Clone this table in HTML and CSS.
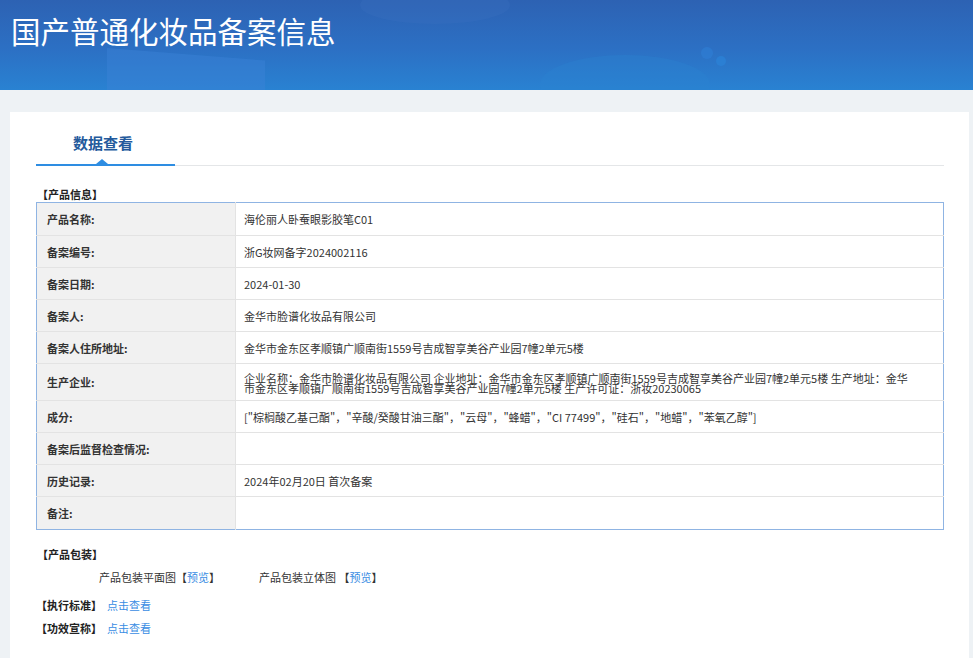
FILE: index.html
```html
<!DOCTYPE html>
<html lang="zh-CN">
<head>
<meta charset="utf-8">
<title>国产普通化妆品备案信息</title>
<link rel="stylesheet" href="styles.css">
</head>
<body>
<header class="banner">
  <div class="decor decor-a"></div>
  <div class="decor decor-b"></div>
  <div class="decor decor-c"></div>
  <div class="decor dot dot-1"></div>
  <div class="decor dot dot-2"></div>
  <h1 class="banner-title">国产普通化妆品备案信息</h1>
</header>
<main class="page">
  <section class="card">
    <div class="tabs">
      <div class="tab active">数据查看</div>
    </div>

    <div class="section-title">【产品信息】</div>
    <table class="info">
      <tr class="edge"><th>产品名称:</th><td>海伦丽人卧蚕眼影胶笔C01</td></tr>
      <tr><th>备案编号:</th><td>浙G妆网备字2024002116</td></tr>
      <tr><th>备案日期:</th><td>2024-01-30</td></tr>
      <tr><th>备案人:</th><td>金华市脸谱化妆品有限公司</td></tr>
      <tr><th>备案人住所地址:</th><td>金华市金东区孝顺镇广顺南街1559号吉成智享美谷产业园7幢2单元5楼</td></tr>
      <tr class="tall"><th>生产企业:</th><td class="tight">企业名称：金华市脸谱化妆品有限公司 企业地址：金华市金东区孝顺镇广顺南街1559号吉成智享美谷产业园7幢2单元5楼 生产地址：金华市金东区孝顺镇广顺南街1559号吉成智享美谷产业园7幢2单元5楼 生产许可证：浙妆20230065</td></tr>
      <tr><th>成分:</th><td>["棕榈酸乙基己酯"，"辛酸/癸酸甘油三酯"，"云母"，"蜂蜡"，"CI 77499"，"硅石"，"地蜡"，"苯氧乙醇"]</td></tr>
      <tr><th>备案后监督检查情况:</th><td></td></tr>
      <tr><th>历史记录:</th><td>2024年02月20日 首次备案</td></tr>
      <tr class="edge"><th>备注:</th><td></td></tr>
    </table>

    <div class="section-title pack-title">【产品包装】</div>
    <div class="pack-row">
      <span class="pack-item">产品包装平面图【<a class="link" href="#">预览</a>】</span>
      <span class="pack-item">产品包装立体图 【<a class="link" href="#">预览</a>】</span>
    </div>
    <div class="line-item"><span class="section-title inline">【执行标准】</span><a class="link" href="#">点击查看</a></div>
    <div class="line-item"><span class="section-title inline">【功效宣称】</span><a class="link" href="#">点击查看</a></div>
  </section>
</main>
</body>
</html>
```

FILE: styles.css
```css
* { box-sizing: border-box; }
html, body { margin: 0; padding: 0; }
body {
  background: #eef2f5;
  font-family: "Noto Sans CJK SC", "Noto Sans", sans-serif;
  color: #333;
  font-size: 11px;
  overflow: hidden;
}

.banner {
  position: relative;
  height: 90px;
  overflow: hidden;
  background: linear-gradient(180deg, #2d62b3 0%, #2c70c4 55%, #2982d2 100%);
}
.decor { position: absolute; }
.decor-a {
  left: 107px; top: 48px; width: 158px; height: 50px;
  background: #3b82d6; opacity: .45;
  clip-path: polygon(0 0, 100% 25%, 100% 100%, 0 100%);
}
.decor-b {
  left: 360px; top: -14px; width: 150px; height: 38px;
  border-radius: 50%;
  background: #3a70bf; opacity: .3;
}
.decor-c {
  left: 540px; top: 55px; width: 170px; height: 60px;
  border-radius: 50%;
  background: #2c84d2; opacity: .35;
}
.dot { border-radius: 50%; background: #2f7fd6; opacity: .6; }
.dot-1 { left: 701px; top: 47px; width: 12px; height: 12px; }
.dot-2 { left: 716px; top: 56px; width: 10px; height: 10px; background: #2c86da; }

.banner-title {
  position: relative;
  margin: 0;
  padding: 12px 0 0 11px;
  color: #fff;
  font-size: 29.5px;
  font-weight: 400;
  line-height: 36px;
  letter-spacing: 0;
}

.page {
  padding: 22px 4px 0 10px;
}
.card {
  background: #fff;
  min-height: 560px;
  padding: 0 25px 30px 26px;
}

.tabs {
  height: 54px;
  border-bottom: 1px solid #e4e6e8;
  display: flex;
  align-items: flex-end;
}
.tab {
  position: relative;
  width: 139px;
  height: 54px;
  padding: 20px 0 0 37px;
  font-size: 15px;
  font-weight: 700;
  color: #245a9c;
  line-height: 22px;
  border-bottom: 2px solid #2e8de2;
  margin-bottom: -1px;
}
.tab::after {
  content: "";
  position: absolute;
  left: 60px;
  bottom: 0;
  border-left: 6px solid transparent;
  border-right: 6px solid transparent;
  border-bottom: 5px solid #2e8de2;
}

.section-title {
  font-weight: 700;
  color: #222;
  font-size: 11px;
  line-height: 13px;
  margin: 22px 0 1px 1px;
}
.section-title.inline { margin: 0; display: inline-block; }

.info {
  width: 908px;
  border-collapse: collapse;
  border: 1px solid #8fb4e3;
  table-layout: fixed;
}
.info th, .info td {
  height: 32px;
  border-top: 1px solid #e3e3e3;
  font-size: 11px;
  line-height: 14px;
  padding: 0 8px;
  vertical-align: middle;
}
.info tr:first-child th, .info tr:first-child td { border-top: 0; }
.info tr.edge th, .info tr.edge td { height: 33px; }
.info th {
  width: 199px;
  background: #f1f1f1;
  text-align: left;
  font-weight: 700;
  color: #333;
  padding-left: 10px;
  border-right: 1px solid #e3e3e3;
}
.info td { color: #333; background: #fff; }
.info tr.tall th, .info tr.tall td { height: 37px; }
.info td.tight { line-height: 10px; padding-right: 30px; padding-top: 2px; }

.pack-title { margin-top: 18px; margin-bottom: 0; }
.pack-row {
  display: flex;
  padding-left: 63px;
  margin-top: 9px;
  line-height: 14px;
}
.pack-item { width: 160px; }
.link { color: #3a8de3; text-decoration: none; }

.line-item {
  margin-top: 9px;
  line-height: 14px;
}
.line-item .link { margin-left: 5px; }
.line-item + .line-item { margin-top: 9px; }
.pack-row + .line-item { margin-top: 14px; }
```
